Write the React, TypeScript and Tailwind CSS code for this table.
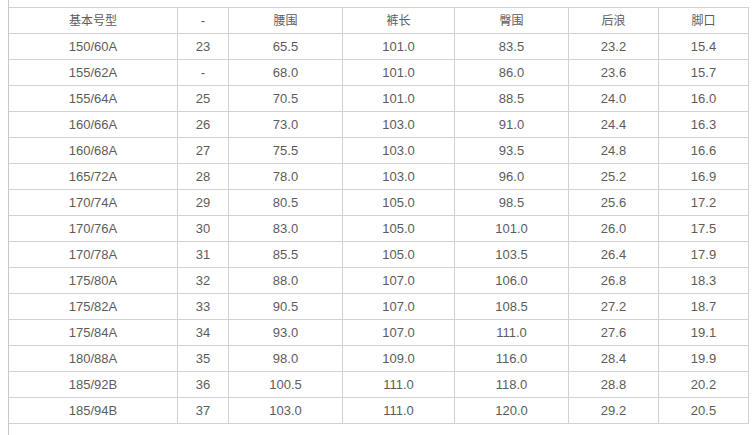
import React from "react";

const widths = ["w-[169px]", "w-[51px]", "w-[114px]", "w-[112px]", "w-[114px]", "w-[90px]", "w-[90px]"];

const header = ["基本号型", "-", "腰围", "裤长", "臀围", "后浪", "脚口"];

const rows: string[][] = [
  ["150/60A", "23", "65.5", "101.0", "83.5", "23.2", "15.4"],
  ["155/62A", "-", "68.0", "101.0", "86.0", "23.6", "15.7"],
  ["155/64A", "25", "70.5", "101.0", "88.5", "24.0", "16.0"],
  ["160/66A", "26", "73.0", "103.0", "91.0", "24.4", "16.3"],
  ["160/68A", "27", "75.5", "103.0", "93.5", "24.8", "16.6"],
  ["165/72A", "28", "78.0", "103.0", "96.0", "25.2", "16.9"],
  ["170/74A", "29", "80.5", "105.0", "98.5", "25.6", "17.2"],
  ["170/76A", "30", "83.0", "105.0", "101.0", "26.0", "17.5"],
  ["170/78A", "31", "85.5", "105.0", "103.5", "26.4", "17.9"],
  ["175/80A", "32", "88.0", "107.0", "106.0", "26.8", "18.3"],
  ["175/82A", "33", "90.5", "107.0", "108.5", "27.2", "18.7"],
  ["175/84A", "34", "93.0", "107.0", "111.0", "27.6", "19.1"],
  ["180/88A", "35", "98.0", "109.0", "116.0", "28.4", "19.9"],
  ["185/92B", "36", "100.5", "111.0", "118.0", "28.8", "20.2"],
  ["185/94B", "37", "103.0", "111.0", "120.0", "29.2", "20.5"],
];

function Row({ cells, head }: { cells: string[]; head?: boolean }) {
  return (
    <div className="flex h-[26px] border-b border-[#d2d2d2]">
      {cells.map((c, i) => (
        <div
          key={i}
          className={`${widths[i]} shrink-0 flex items-center justify-center border-r border-[#d2d2d2] ${
            head && i !== 1 ? "text-[12px]" : "text-[13px]"
          }`}
        >
          {c}
        </div>
      ))}
    </div>
  );
}

export default function App() {
  return (
    <div
      className="w-[756px] h-[435px] bg-white text-[#5c5c5c] overflow-hidden"
      style={{ fontFamily: '"Liberation Sans", Arial, "Noto Sans CJK SC", sans-serif' }}
    >
      <div className="ml-[8px] h-[435px] border-l border-[#c8c8c8] pt-[7px]">
        <div className="w-[740px] border-t border-[#d2d2d2]">
          <Row cells={header} head />
          {rows.map((r, i) => (
            <Row key={i} cells={r} />
          ))}
        </div>
      </div>
    </div>
  );
}
